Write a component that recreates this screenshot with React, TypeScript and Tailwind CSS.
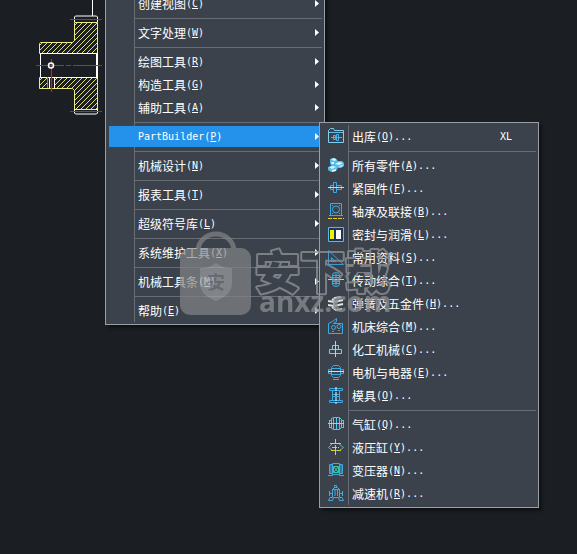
import React from 'react';
import clsx from 'clsx';

type Entry = {
  label: string;
  hotkey: string;
  icon?: React.ReactNode;
  shortcut?: string;
  active?: boolean;
};

// each inner array is a group, groups are divided by a separator
const mainGroups: Entry[][] = [
  [{ label: '创建视图', hotkey: 'C' }],
  [{ label: '文字处理', hotkey: 'W' }],
  [
    { label: '绘图工具', hotkey: 'R' },
    { label: '构造工具', hotkey: 'G' },
    { label: '辅助工具', hotkey: 'A' },
  ],
  [{ label: 'PartBuilder', hotkey: 'P', active: true }],
  [{ label: '机械设计', hotkey: 'N' }],
  [{ label: '报表工具', hotkey: 'T' }],
  [{ label: '超级符号库', hotkey: 'L' }],
  [{ label: '系统维护工具', hotkey: 'X' }],
  [{ label: '机械工具条', hotkey: 'M' }],
  [{ label: '帮助', hotkey: 'E' }],
];

const icons = {
  store: (
    <g stroke="#7fcdf0">
      <path d="M.5 14.5v-12l2-2h3l1 2h9v12z" />
      <path d="M1 4.5h14" stroke="#6ab8de" />
      <path d="M3 9.5h11M5.5 7.5h2v4h-2zM8.5 6.5h2v6h-2z" stroke="#45b5ee" />
    </g>
  ),
  parts: (
    <g stroke="none">
      <path d="M2 2l5-1 3 3 4 0 2 2v3l-3 2-3 0-2 3-5 1-3-2v-3l3-1-1-3z" fill="#55bdec" />
      <path d="M3 2l3-1 3 2-3 1zM3 5l3 0v2l-2 0zM7 7l4-2 4 1-4 2zM11 9l4-1v1l-3 1zM1 10l4-1 3 1-4 2zM4 13l4-1v2l-4 1z" fill="#d8f6ff" />
    </g>
  ),
  bolt: (
    <g stroke="#3fa9e2">
      <path d="M5.5 2.5h3v10h-3zM2.500 5.500h3v4h-3zM8.500 5.500h5v4h-5z" />
      <path d="M0 7.500h16" stroke="#c5dceb" />
    </g>
  ),
  bearing: (
    <g stroke="#3fa9e2">
      <path d="M2.500.5h11v12h-11zM1 12.500h14" />
      <circle cx="8" cy="6.500" r="3.500" />
      <path d="M5 3l-1-1M11 3l1-1M5 10l-1 1M11 10l1 1" />
      <path d="M0 15.500h16" stroke="#e6cf20" strokeDasharray="4 1" />
    </g>
  ),
  seal: (
    <g stroke="none">
      <path d="M.5 1.500h15v14H.5z" fill="#16395c" stroke="#53b9ee" />
      <path d="M2 4h4v9H2z" fill="#f6f000" />
      <path d="M8 4h5v9H8z" fill="#fff" />
    </g>
  ),
  triangle: <path d="M.5 1.500v14h15zM3.500 8.500v4h4z" stroke="#3a9ad6" />,
  drive: (
    <g stroke="#3fa9e2">
      <rect x="4.500" y=".5" width="7" height="14" rx="3" />
      <path d="M4 3.500h8M4 5.500h8M4 9.500h8M4 11.500h8M8 1v13" />
      <path d="M0 7.500h16" stroke="#bcccdd" />
    </g>
  ),
  spring: (
    <g stroke="#e4e4e4" strokeWidth="2">
      <path d="M13 2l-6 1-3 2M0 6l6 1 9-2M0 10l6 1 9-2M4 12l4 3 6-1" />
      <path d="M6 3v11" stroke="#b5b5b5" />
    </g>
  ),
  machine: (
    <g stroke="#3fa9e2">
      <path d="M.5 15.500v-10l4-2 4-3v3l-3 2h9v10z" />
      <circle cx="5.500" cy="9.500" r="2" />
      <circle cx="11" cy="8.500" r="2" />
      <path d="M4 13.500h2M10 12.500h2" stroke="#c9734b" />
    </g>
  ),
  chemical: (
    <g stroke="#8fc4e0">
      <path d="M4.500 4.500h6v4h-6zM1.500 8.500h12v4h-12z" />
      <path d="M7.500 0v16" stroke="#f0dc14" />
    </g>
  ),
  motor: (
    <g stroke="#3fa9e2">
      <path d="M5.500 1.500h5l2 2v8l-2 2h-5l-2-2v-8zM.5 5.500h3v4h-3zM12.500 5.500h3v4h-3zM4 4.500h8M4 10.500h8M5 15.500h6" />
      <path d="M0 7.500h16" stroke="#c5e6f5" />
    </g>
  ),
  mould: (
    <g stroke="#3fa9e2">
      <path d="M1.500 1.500h13v2h-13zM1.500 13.500h13v2h-13zM4.500 4v9M11.500 4v9M5 7.500h6M5 9.500h6" />
      <path d="M8 0v17" stroke="#e8f4fa" strokeDasharray="4 1" />
    </g>
  ),
  cylinder: (
    <g stroke="#5fc0ea">
      <path d="M3.500 2.500l2-1h6l2 2v8l-2 2h-6l-2-1zM5.500 2v11M8.500 2v11M11.500 2v11M1.500 4.500v7M15.500 4.500v7M1 4.500h2M1 11.500h2M13 4.500h3M13 11.500h3" />
      <path d="M0 7.500h16" stroke="#e2d222" />
    </g>
  ),
  hydraulic: (
    <g stroke="#e2d222">
      <path d="M.5 8.500l4-4h6l5 4-4 3h-7z" stroke="#5fb0c8" />
      <path d="M7.500 0v16M2 4.500h12M4 8.500h7M3 11.500h10" strokeDasharray="5 1" />
    </g>
  ),
  transformer: (
    <g stroke="#3fa9e2">
      <path d="M1.500 2.500h3v9h-3zM11.500 2.500h3v9h-3zM4.500 1.500h7v11h-7zM0 13.500h5M11 13.500h5M3 2v10M13 2v10" />
      <path d="M5.500 4.500h5v6h-5zM6 5l4 5M10 5l-4 5" stroke="#35c9a8" />
    </g>
  ),
  reducer: (
    <g stroke="#3fa9e2">
      <path d="M6.500.5h2v2h-2zM4.500 12.500v-8l2-2h3l2 2v8zM4 4.500h8M7 5v6M9.500 5v6" />
      <path d="M1.500 6v5M1 8.500h3M14.500 6v5M12 8.500h3M4 12.500h-2l-1.500 3h4l1-3M12 12.500h2l1.500 3h-4l-1-3" />
    </g>
  ),
};

const subGroups: Entry[][] = [
  [{ label: '出库', hotkey: 'O', icon: icons.store, shortcut: 'XL' }],
  [
    { label: '所有零件', hotkey: 'A', icon: icons.parts },
    { label: '紧固件', hotkey: 'F', icon: icons.bolt },
    { label: '轴承及联接', hotkey: 'B', icon: icons.bearing },
    { label: '密封与润滑', hotkey: 'L', icon: icons.seal },
    { label: '常用资料', hotkey: 'S', icon: icons.triangle },
    { label: '传动综合', hotkey: 'T', icon: icons.drive },
    { label: '弹簧及五金件', hotkey: 'H', icon: icons.spring },
    { label: '机床综合', hotkey: 'M', icon: icons.machine },
    { label: '化工机械', hotkey: 'C', icon: icons.chemical },
    { label: '电机与电器', hotkey: 'E', icon: icons.motor },
    { label: '模具', hotkey: 'O', icon: icons.mould },
  ],
  [
    { label: '气缸', hotkey: 'Q', icon: icons.cylinder },
    { label: '液压缸', hotkey: 'Y', icon: icons.hydraulic },
    { label: '变压器', hotkey: 'N', icon: icons.transformer },
    { label: '减速机', hotkey: 'R', icon: icons.reducer },
  ],
];

const mono = "font-['DejaVu_Sans_Mono','Noto_Sans_CJK_SC',monospace] text-[10px]";

function MenuItem({ item }: { item: Entry }) {
  const latin = /^[A-Za-z]+$/.test(item.label);
  return (
    <button
      type="button"
      role="menuitem"
      aria-haspopup={item.icon ? undefined : 'menu'}
      className="group relative flex h-[23px] w-full items-center text-left"
    >
      {/* highlight is a pixel shorter than the row on each side */}
      <span
        className={clsx(
          'flex h-[21px] w-full items-center',
          item.active ? 'bg-[#2492ea]' : 'group-hover:bg-[#2492ea]',
        )}
      >
        <span className="flex w-[29px] shrink-0 pl-[5px]">
          {item.icon && (
            <svg width="16" height="17" viewBox="0 0 16 17" fill="none" aria-hidden="true">
              {item.icon}
            </svg>
          )}
        </span>
        <span className={clsx('whitespace-nowrap', latin && mono)}>{item.label}</span>
        <span className={clsx('whitespace-nowrap', mono)}>
          (<u className="underline-offset-1">{item.hotkey}</u>){item.icon && '...'}
        </span>
        {item.shortcut && <span className={clsx('ml-auto pr-6', mono)}>{item.shortcut}</span>}
        {!item.icon && (
          <svg className="ml-auto mr-[3px]" width="4" height="7" viewBox="0 0 4 7" aria-hidden="true">
            <path d="M0 0l4 3.500-4 3.500z" fill="#fff" />
          </svg>
        )}
      </span>
    </button>
  );
}

function Menu({ groups, label, className }: { groups: Entry[][]; label: string; className: string }) {
  return (
    <div
      role="menu"
      aria-label={label}
      className={clsx(
        'absolute w-[220px] border border-[#9a9fa4] bg-[#3b424b] py-0.5 shadow-[3px_3px_3px_rgba(0,0,0,0.45)]',
        className,
      )}
    >
      <div className="relative pl-[3px] pr-0.5">
        <div className="absolute inset-y-0 left-7 w-px bg-[#686d73]" />
        {groups.map((group, i) => (
          <React.Fragment key={i}>
            {i > 0 && (
              <div role="separator" className="flex h-[6px] items-center pl-[26px]">
                <div className="h-px w-full bg-[#686d73]" />
              </div>
            )}
            {group.map((item) => (
              <MenuItem key={item.label} item={item} />
            ))}
          </React.Fragment>
        ))}
      </div>
    </div>
  );
}

// section view of a flanged hub, the drawing behind the menus
function HubDrawing() {
  return (
    <svg className="absolute left-0 top-0" width="106" height="125" viewBox="0 0 106 125" fill="none" aria-hidden="true">
      <defs>
        <pattern id="hatch" width="5" height="5" patternUnits="userSpaceOnUse">
          <path d="M-1 6L6-1M-1 1L1-1M4 6L6 4" stroke="#e2e266" strokeWidth="1" />
        </pattern>
      </defs>
      <path d="M92.500 0v16" stroke="#fff" />
      <path d="M74.500 22.500h23v31h-58v-10l1-1h32l2-2zM39.500 77.500h58v32h-23v-19l-2-2h-33z" fill="url(#hatch)" stroke="#ecec80" />
      <path d="M74.500 22v-5l1-1h21l1 1v5M74.500 109v4l1 1h21l1-1v-4" stroke="#fff" />
      <path d="M40.500 53v24M40 53.500h57M40 77.500h57" stroke="#fff" />
      <path d="M97 53v25" stroke="#fff" strokeWidth="2" />
      <path d="M48 78h6v10h-6z" fill="#1b1f24" />
      <path d="M49.500 77v11M54.500 77v11" stroke="#fff" />
      <path d="M47.500 77v11" stroke="#20b09a" />
      <path
        d="M70 19.500h32M70 111.500h32M36 65.500h28M66 65.500h5M73 65.500h29M51.500 59v33"
        stroke="#f0101c"
        strokeWidth="1.200"
      />
      <circle cx="51" cy="65.500" r="2.500" stroke="#fff" strokeWidth="1.500" />
    </svg>
  );
}

function Watermark() {
  return (
    <svg
      className="pointer-events-none absolute left-[176px] top-[230px]"
      width="230"
      height="92"
      viewBox="0 0 230 92"
      fill="none"
      aria-hidden="true"
    >
      <defs>
        {/* keeps the characters hollow so only their outer contour is drawn */}
        <mask id="hollow" maskUnits="userSpaceOnUse" x="0" y="0" width="230" height="92">
          <rect width="230" height="92" fill="#fff" />
          <text x="79" y="59" fontFamily="'Noto Sans CJK SC', sans-serif" fontWeight="900" fontSize="45" fill="#000">
            安下载
          </text>
        </mask>
      </defs>
      <g opacity="0.68">
        <path d="M22 21a18 17 0 0 1 36 0" stroke="#858789" strokeWidth="5" />
        <rect x="4" y="18" width="71" height="67" rx="10" fill="#858789" />
        <path d="M40 33c5 4 10 5 16 5v15c0 9-6 14-16 18c-10-4-16-9-16-18v-15c6 0 11-1 16-5z" fill="#a3a5a7" />
        <text x="40" y="59" textAnchor="middle" fontSize="18" fontWeight="700" fontFamily="'Noto Sans CJK SC', sans-serif" fill="#7b7d80">
          安
        </text>
      </g>
      <text
        x="79"
        y="59"
        mask="url(#hollow)"
        fontFamily="'Noto Sans CJK SC', sans-serif"
        fontWeight="900"
        fontSize="45"
        stroke="#8d8f92"
        strokeWidth="4"
        strokeLinejoin="round"
        opacity="0.8"
      >
        安下载
      </text>
      <text
        x="83"
        y="82"
        fontFamily="'Open Sans', sans-serif"
        fontWeight="700"
        fontSize="28"
        fill="#8c8e91"
        opacity="0.75"
      >
        anxz.com
      </text>
    </svg>
  );
}

export default function App() {
  return (
    <main className="relative min-h-screen overflow-hidden bg-[#1b1f24] font-['Noto_Sans_CJK_SC',sans-serif] text-[12px] leading-4 text-white">
      <HubDrawing />
      <Menu groups={mainGroups} label="机械" className="left-[105px] top-[-11px]" />
      <Menu groups={subGroups} label="PartBuilder" className="left-[319px] top-[122px]" />
      <Watermark />
    </main>
  );
}
